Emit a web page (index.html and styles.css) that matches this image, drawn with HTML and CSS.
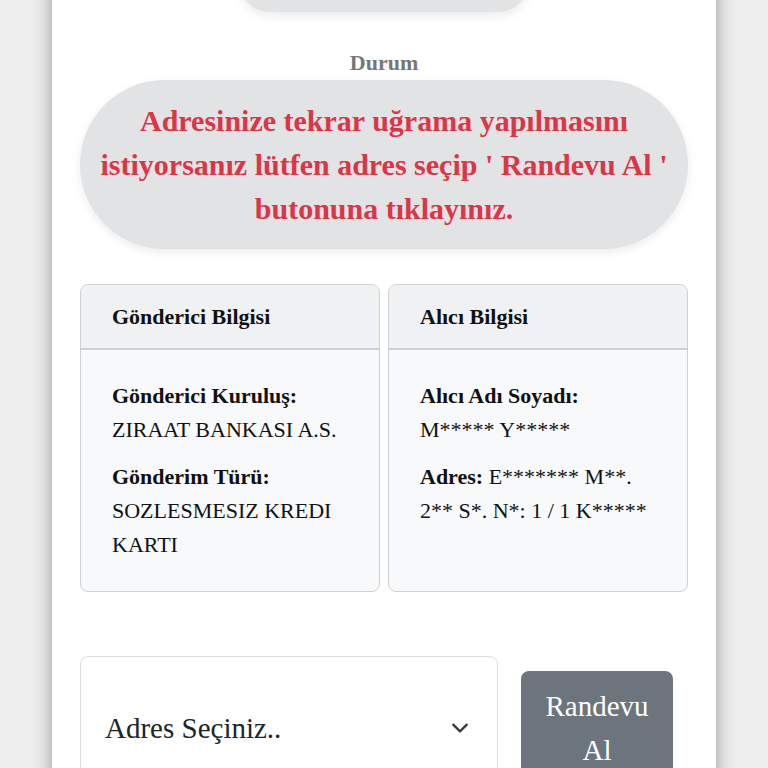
FILE: index.html
```html
<!DOCTYPE html>
<html lang="tr">
<head>
<meta charset="utf-8">
<title>Gönderi Durumu</title>
<link rel="stylesheet" href="styles.css">
</head>
<body>
<main class="panel">
  <div class="top-pill"></div>
  <h6 class="status-label">Durum</h6>
  <div class="status-box">Adresinize tekrar uğrama yapılmasını istiyorsanız lütfen adres seçip ' Randevu Al ' butonuna tıklayınız.</div>
  <section class="cards">
    <div class="card">
      <div class="card-header">Gönderici Bilgisi</div>
      <div class="card-body">
        <p><b>Gönderici Kuruluş:</b><br>ZIRAAT BANKASI A.S.</p>
        <p><b>Gönderim Türü:</b><br>SOZLESMESIZ KREDI KARTI</p>
      </div>
    </div>
    <div class="card">
      <div class="card-header">Alıcı Bilgisi</div>
      <div class="card-body">
        <p><b>Alıcı Adı Soyadı:</b><br>M***** Y*****</p>
        <p><b>Adres:</b> E******* M**. 2** S*. N*: 1 / 1 K*****</p>
      </div>
    </div>
  </section>
  <section class="actions">
    <div class="select">
      <span>Adres Seçiniz..</span>
      <svg class="chev" width="18" height="18" viewBox="0 0 16 16"><path d="M2 5l6 6 6-6" fill="none" stroke="#343a40" stroke-width="2" stroke-linecap="round" stroke-linejoin="round"/></svg>
    </div>
    <button class="btn">Randevu Al</button>
  </section>
</main>
</body>
</html>
```

FILE: styles.css
```css
html, body {
  margin: 0;
  padding: 0;
}
body {
  background: #eeeeee;
  font-family: "Liberation Serif", "Times New Roman", serif;
  color: #111;
}
.panel {
  width: 608px;
  margin: 0 auto;
  padding: 0 28px 40px;
  background: #fff;
  box-shadow: 0 0 18px rgba(0, 0, 0, 0.35);
  min-height: 900px;
}
.top-pill {
  width: 288px;
  height: 60px;
  margin: -48px auto 0;
  background: #e2e3e5;
  border-radius: 30px;
  box-shadow: 0 4px 10px rgba(0, 0, 0, 0.08);
}
.status-label {
  margin: 39px 0 5px;
  text-align: center;
  font-size: 22px;
  line-height: 24px;
  font-weight: bold;
  color: #777;
}
.status-box {
  background: #e2e3e5;
  border-radius: 85px;
  padding: 19px 18px 18px;
  text-align: center;
  color: #dc3545;
  font-weight: bold;
  font-size: 30px;
  line-height: 44px;
  box-shadow: 0 3px 10px rgba(0, 0, 0, 0.08);
}
.cards {
  display: grid;
  grid-template-columns: 1fr 1fr;
  gap: 8px;
  margin-top: 35px;
}
.card {
  border: 1px solid #cfd0d2;
  border-radius: 8px;
  overflow: hidden;
  background: #f8f9fa;
  display: flex;
  flex-direction: column;
}
.card-header {
  background: #f0f1f2;
  border-bottom: 2px solid #cfd0d2;
  height: 63px;
  padding: 0 31px;
  display: flex;
  align-items: center;
  font-weight: bold;
  font-size: 22px;
}
.card-body {
  padding: 29px 34px 29px 31px;
  font-size: 22px;
  line-height: 34px;
}
.card-body p {
  margin: 0 0 13px;
}
.card-body p:last-child {
  margin-bottom: 0;
}
.actions {
  display: flex;
  align-items: center;
  margin-top: 64px;
}
.select {
  width: 418px;
  height: 144px;
  box-sizing: border-box;
  border: 1px solid #dedfe0;
  border-radius: 8px;
  padding: 0 28px 0 24px;
  display: flex;
  align-items: center;
  justify-content: space-between;
  font-size: 29px;
  color: #212529;
  background: #fff;
}
.btn {
  margin-left: 23px;
  width: 152px;
  height: 114px;
  border: 0;
  border-radius: 8px;
  background: #6c757d;
  color: #fff;
  font-family: "Liberation Serif", "Times New Roman", serif;
  font-size: 29px;
  line-height: 44px;
  padding: 0 18px;
}
```
